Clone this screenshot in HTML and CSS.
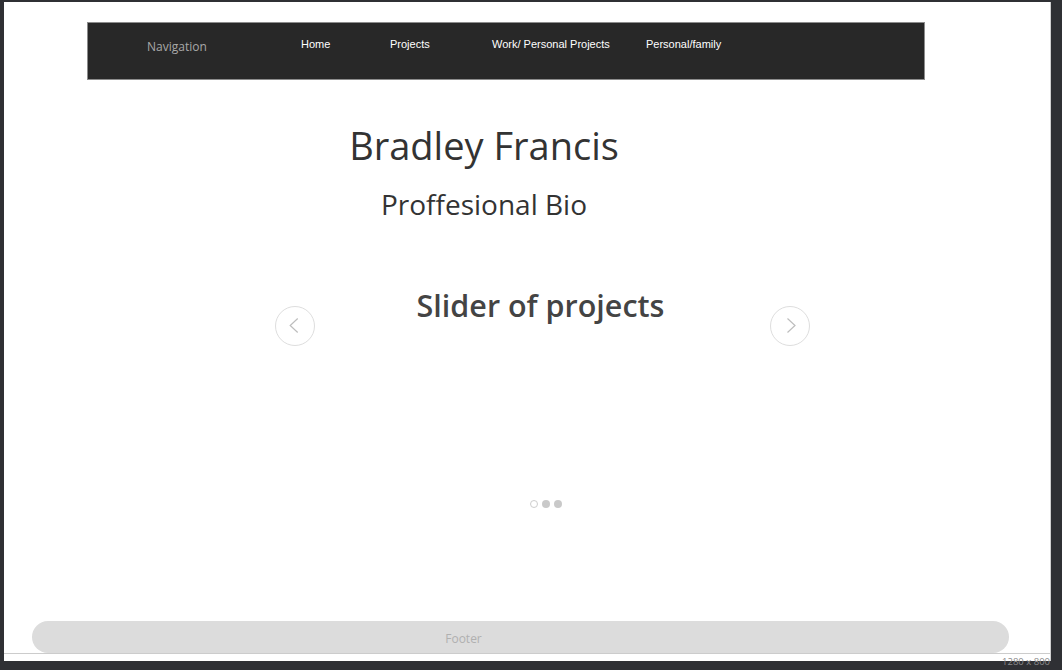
FILE: index.html
```html
<!DOCTYPE html>
<html lang="en">
<head>
    <meta charset="UTF-8">
    <meta name="viewport" content="width=device-width, initial-scale=1.0">
    <title>Bradley Francis</title>
    <link rel="stylesheet" href="styles.css">
</head>
<body>
    <div class="frame">
        <div class="canvas">
            <!-- Top navigation -->
            <nav class="topnav">
                <span class="nav-title">Navigation</span>
                <ul class="nav-menu">
                    <li class="item-home">Home</li>
                    <li class="item-projects">Projects</li>
                    <li class="item-work">Work/ Personal Projects</li>
                    <li class="item-family">Personal/family</li>
                </ul>
            </nav>

            <main class="content">
                <header class="intro">
                    <h1>Bradley Francis</h1>
                    <h2>Proffesional Bio</h2>
                </header>

                <!-- Project slider -->
                <section class="slider">
                    <button class="slider-arrow" type="button" aria-label="Previous">
                        <svg width="40" height="40" viewBox="0 0 40 40"><path d="M22.7 12.5 L15.2 19.5 L22.7 26.5" fill="none" stroke="#bdbdbd" stroke-width="1.2"/></svg>
                    </button>
                    <div class="slider-body">
                        <h3>Slider of projects</h3>
                        <div class="dots">
                            <span class="dot active"></span>
                            <span class="dot"></span>
                            <span class="dot"></span>
                        </div>
                    </div>
                    <button class="slider-arrow" type="button" aria-label="Next">
                        <svg width="40" height="40" viewBox="0 0 40 40"><path d="M17.5 12.5 L25 19.5 L17.5 26.5" fill="none" stroke="#bdbdbd" stroke-width="1.2"/></svg>
                    </button>
                </section>
            </main>

            <footer class="footer">Footer</footer>
            <div class="fold"></div>
        </div>
        <span class="size-label">1280 x 800</span>
    </div>
</body>
</html>
```

FILE: styles.css
```css
/* Page frame */
body {
    margin: 0;
    padding: 0;
    background-color: #2f3034;
    font-family: "Open Sans", Arial, sans-serif;
}

.frame {
    position: relative;
    height: 670px;
    overflow: hidden;
}

.canvas {
    display: flex;
    flex-direction: column;
    box-sizing: border-box;
    height: 659px;
    margin: 2px 11px 0 4px;
    background: #fff;
    border-right: 1px solid #cfcfcf;
}

/* Navigation bar */
.topnav {
    display: flex;
    align-items: flex-start;
    box-sizing: border-box;
    width: 838px;
    height: 58px;
    margin: 20px 0 0 83px;
    padding: 14px 0 0 59px;
    background: #282828;
    border: 1px solid #8c8c8c;
}

.nav-title {
    width: 154px;
    font-size: 12px;
    line-height: 19px;
    color: #a8a8a8;
}

.nav-menu {
    display: flex;
    margin: 0;
    padding: 0;
    list-style: none;
}

.nav-menu li {
    font-family: "Liberation Sans", Arial, sans-serif;
    font-size: 11px;
    line-height: 14px;
    color: #fff;
}

.item-home {
    width: 89px;
}

.item-projects {
    width: 102px;
}

.item-work {
    width: 154px;
}

/* Intro */
.content {
    flex: 1;
}

.intro {
    width: 400px;
    margin: 39px 0 0 280px;
    text-align: center;
    color: #333;
}

.intro h1 {
    margin: 0;
    font-size: 38px;
    line-height: 52px;
    font-weight: 400;
}

.intro h2 {
    margin: 14px 0 0;
    font-size: 28px;
    line-height: 38px;
    font-weight: 400;
}

/* Slider */
.slider {
    display: flex;
    align-items: flex-start;
    width: 535px;
    margin: 62px 0 0 271px;
}

.slider-arrow {
    flex: none;
    width: 40px;
    height: 40px;
    margin-top: 21px;
    padding: 0;
    background: #fff;
    border: 1px solid #dedede;
    border-radius: 50%;
    cursor: pointer;
}

.slider-arrow svg {
    display: block;
    margin: -1px;
}

.slider-body {
    flex: 1;
    padding-right: 4px;
    text-align: center;
}

.slider-body h3 {
    margin: 0;
    font-size: 30.5px;
    line-height: 41px;
    font-weight: 600;
    color: #444;
}

.dots {
    display: flex;
    justify-content: center;
    gap: 4px;
    margin-top: 174px;
    padding-left: 11px;
}

.dot {
    box-sizing: border-box;
    width: 8px;
    height: 8px;
    border-radius: 50%;
    background: #c9c9c9;
}

.dot.active {
    background: #fff;
    border: 1px solid #cdcdcd;
}

/* Footer */
.footer {
    box-sizing: border-box;
    width: 977px;
    height: 32px;
    margin-left: 28px;
    padding: 3px 114px 0 0;
    background: #dcdcdc;
    border-radius: 16px;
    text-align: center;
    font-size: 12px;
    line-height: 29px;
    color: #b0b0b0;
}

.fold {
    height: 7px;
    border-top: 1px solid #cccccc;
}

.size-label {
    position: absolute;
    top: 656px;
    right: 12px;
    font-size: 9.5px;
    line-height: 11px;
    color: #8a8a8a;
}
```
